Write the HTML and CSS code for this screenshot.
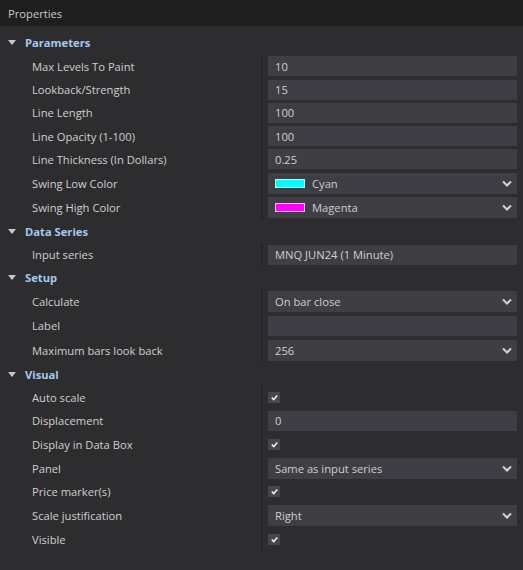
FILE: index.html
```html
<!DOCTYPE html>
<html>
<head>
<meta charset="utf-8">
<link rel="stylesheet" href="styles.css">
</head>
<body>
<div class="window">
  <div class="titlebar">Properties</div>
  <div class="grid">
    <div class="row hdr"><span class="tri"></span><span class="htext">Parameters</span></div>
    <div class="row inp"><div class="lbl">Max Levels To Paint</div><div class="sep"></div><div class="val"><div class="box">10</div></div></div>
    <div class="row inp"><div class="lbl">Lookback/Strength</div><div class="sep"></div><div class="val"><div class="box">15</div></div></div>
    <div class="row inp"><div class="lbl">Line Length</div><div class="sep"></div><div class="val"><div class="box">100</div></div></div>
    <div class="row inp"><div class="lbl">Line Opacity (1-100)</div><div class="sep"></div><div class="val"><div class="box">100</div></div></div>
    <div class="row inp"><div class="lbl">Line Thickness (In Dollars)</div><div class="sep"></div><div class="val"><div class="box">0.25</div></div></div>
    <div class="row dd"><div class="lbl">Swing Low Color</div><div class="sep"></div><div class="val"><div class="box drop"><span class="swatch cyan"></span><span class="dtext">Cyan</span><svg class="chev" viewBox="0 0 10 6"><path d="M1 1 L5 5 L9 1"/></svg></div></div></div>
    <div class="row dd"><div class="lbl">Swing High Color</div><div class="sep"></div><div class="val"><div class="box drop"><span class="swatch magenta"></span><span class="dtext">Magenta</span><svg class="chev" viewBox="0 0 10 6"><path d="M1 1 L5 5 L9 1"/></svg></div></div></div>
    <div class="row hdr"><span class="tri"></span><span class="htext">Data Series</span></div>
    <div class="row inp"><div class="lbl">Input series</div><div class="sep"></div><div class="val"><div class="box">MNQ JUN24 (1 Minute)</div></div></div>
    <div class="row hdr"><span class="tri"></span><span class="htext">Setup</span></div>
    <div class="row dd"><div class="lbl">Calculate</div><div class="sep"></div><div class="val"><div class="box drop"><span class="dtext">On bar close</span><svg class="chev" viewBox="0 0 10 6"><path d="M1 1 L5 5 L9 1"/></svg></div></div></div>
    <div class="row inp tall"><div class="lbl">Label</div><div class="sep"></div><div class="val"><div class="box"></div></div></div>
    <div class="row dd"><div class="lbl">Maximum bars look back</div><div class="sep"></div><div class="val"><div class="box drop"><span class="dtext">256</span><svg class="chev" viewBox="0 0 10 6"><path d="M1 1 L5 5 L9 1"/></svg></div></div></div>
    <div class="row hdr"><span class="tri"></span><span class="htext">Visual</span></div>
    <div class="row chk"><div class="lbl">Auto scale</div><div class="sep"></div><div class="val"><span class="cb"><svg viewBox="0 0 10 10"><path d="M2 5.2 L4.2 7.4 L8 2.8"/></svg></span></div></div>
    <div class="row inp"><div class="lbl">Displacement</div><div class="sep"></div><div class="val"><div class="box">0</div></div></div>
    <div class="row chk"><div class="lbl">Display in Data Box</div><div class="sep"></div><div class="val"><span class="cb"><svg viewBox="0 0 10 10"><path d="M2 5.2 L4.2 7.4 L8 2.8"/></svg></span></div></div>
    <div class="row dd"><div class="lbl">Panel</div><div class="sep"></div><div class="val"><div class="box drop"><span class="dtext">Same as input series</span><svg class="chev" viewBox="0 0 10 6"><path d="M1 1 L5 5 L9 1"/></svg></div></div></div>
    <div class="row chk"><div class="lbl">Price marker(s)</div><div class="sep"></div><div class="val"><span class="cb"><svg viewBox="0 0 10 10"><path d="M2 5.2 L4.2 7.4 L8 2.8"/></svg></span></div></div>
    <div class="row dd"><div class="lbl">Scale justification</div><div class="sep"></div><div class="val"><div class="box drop"><span class="dtext">Right</span><svg class="chev" viewBox="0 0 10 6"><path d="M1 1 L5 5 L9 1"/></svg></div></div></div>
    <div class="row chk"><div class="lbl">Visible</div><div class="sep"></div><div class="val"><span class="cb"><svg viewBox="0 0 10 10"><path d="M2 5.2 L4.2 7.4 L8 2.8"/></svg></span></div></div>
  </div>
</div>
</body>
</html>
```

FILE: styles.css
```css
html, body {
  margin: 0;
  padding: 0;
  background: #2d2d30;
}
body {
  font-family: "Open Sans", "Noto Sans", sans-serif;
  font-size: 11.2px;
  color: #cfcfcf;
}
.window {
  width: 523px;
  height: 570px;
  background: #2d2d30;
  display: flex;
  flex-direction: column;
}
.titlebar {
  height: 26px;
  flex: none;
  background: #1e1e1e;
  color: #c8c8c8;
  display: flex;
  align-items: center;
  padding-left: 8px;
}
.grid {
  padding-top: 5px;
  display: flex;
  flex-direction: column;
}
.row {
  display: flex;
  align-items: stretch;
}
.row.hdr { height: 23.6px; align-items: center; }
.row.inp { height: 23.3px; }
.row.inp.tall { height: 24.3px; }
.row.dd { height: 24.1px; }
.row.chk { height: 23.5px; }
.tri {
  width: 0;
  height: 0;
  margin-left: 8px;
  border-left: 4.5px solid transparent;
  border-right: 4.5px solid transparent;
  border-top: 5px solid #c8c8c8;
}
.htext {
  margin-left: 9px;
  font-weight: 700;
  color: #a6c8ef;
}
.lbl {
  width: 229px;
  padding-left: 32px;
  display: flex;
  align-items: center;
  white-space: nowrap;
}
.sep {
  width: 2px;
  background: #242426;
}
.val {
  flex: 1;
  display: flex;
  align-items: center;
  padding-left: 5px;
  padding-right: 6px;
}
.box {
  flex: 1;
  height: 20px;
  background: #3e3e44;
  display: flex;
  align-items: center;
  padding-left: 7px;
  color: #cfcfcf;
  box-sizing: border-box;
}
.box.drop {
  height: 21px;
  padding-right: 5px;
}
.dtext { flex: 1; }
.swatch {
  width: 30px;
  height: 9px;
  margin-right: 7px;
  box-sizing: border-box;
  border: 1px solid #d8d8d8;
}
.swatch.cyan { background: #00ffff; border-color: #bff; }
.swatch.magenta { background: #ff00ff; border-color: #fbf; }
.chev {
  width: 10px;
  height: 7px;
  fill: none;
  stroke: #d4d4d4;
  stroke-width: 2;
}
.cb {
  width: 12px;
  height: 11px;
  background: #46464c;
  display: flex;
  align-items: center;
  justify-content: center;
}
.cb svg {
  width: 9px;
  height: 9px;
  fill: none;
  stroke: #f0f0f0;
  stroke-width: 1.8;
}
```
